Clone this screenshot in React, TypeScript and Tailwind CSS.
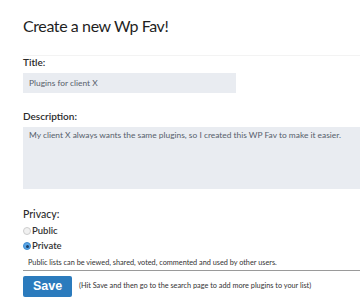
import React from "react"

function Radio({ label, checked }: { label: string; checked?: boolean }) {
  return (
    <label className="flex items-center h-[12px] text-[9.5px] font-semibold text-[#333] leading-[12px]">
      <span
        className={
          checked
            ? "w-[8px] h-[8px] rounded-full bg-[#5aa6e8] border border-[#3f8ccf] flex items-center justify-center"
            : "w-[8px] h-[8px] rounded-full bg-[#f1f1f1] border border-[#cdcdcd]"
        }
      >
        {checked && <span className="w-[3px] h-[3px] rounded-full bg-[#1d3f66]" />}
      </span>
      <span className="ml-[1px]">{label}</span>
    </label>
  )
}

export default function App() {
  return (
    <div className="w-[360px] h-[306px] overflow-hidden bg-white pl-[23px] font-['Lato','Noto_Sans',sans-serif] text-[#222]">
      {/* Header */}
      <h1 className="pt-[15px] pb-[18px] text-[16px] leading-[22px] tracking-[-0.4px] font-normal text-[#1f1f1f] border-b border-[#f3f3f3]">
        Create a new Wp Fav!
      </h1>

      {/* Title */}
      <div className="text-[10px] leading-[13px] font-semibold text-[#2a2a2a]">Title:</div>
      <input
        readOnly
        value="Plugins for client X"
        className="mt-[4px] block w-[213px] h-[20px] bg-[#e9ecf1] px-[6px] text-[8.4px] leading-[11px] text-[#56606b] outline-none"
      />

      {/* Description */}
      <div className="mt-[17px] text-[10px] leading-[13px] font-semibold text-[#2a2a2a]">Description:</div>
      <textarea
        readOnly
        value="My client X always wants the same plugins, so I created this WP Fav to make it easier."
        className="mt-[4px] block w-[337px] h-[62px] resize-none bg-[#e9ecf1] px-[6px] pt-[3px] text-[8.4px] leading-[11px] text-[#56606b] outline-none"
      />

      {/* Privacy */}
      <div className="mt-[19px] text-[10.5px] leading-[13px] font-medium text-[#2a2a2a]">Privacy:</div>
      <div className="mt-[4px] flex flex-col gap-[3px]">
        <Radio label="Public" />
        <Radio label="Private" checked />
      </div>
      <p className="mt-[6px] pl-[5px] text-[7.3px] leading-[10px] text-[#333]">
        Public lists can be viewed, shared, voted, commented and used by other users.
      </p>
      <div className="mt-[2px] border-t border-[#9a9a9a]" />

      {/* Footer */}
      <div className="mt-[5px] flex items-center">
        <button className="w-[49px] h-[21px] rounded-[2px] bg-[#2b7bbd] text-white text-[12.5px] font-bold font-['Liberation_Sans',Arial,sans-serif] leading-none">
          Save
        </button>
        <span className="ml-[7px] text-[7.3px] text-[#333]">
          (Hit Save and then go to the search page to add more plugins to your list)
        </span>
      </div>
    </div>
  )
}
